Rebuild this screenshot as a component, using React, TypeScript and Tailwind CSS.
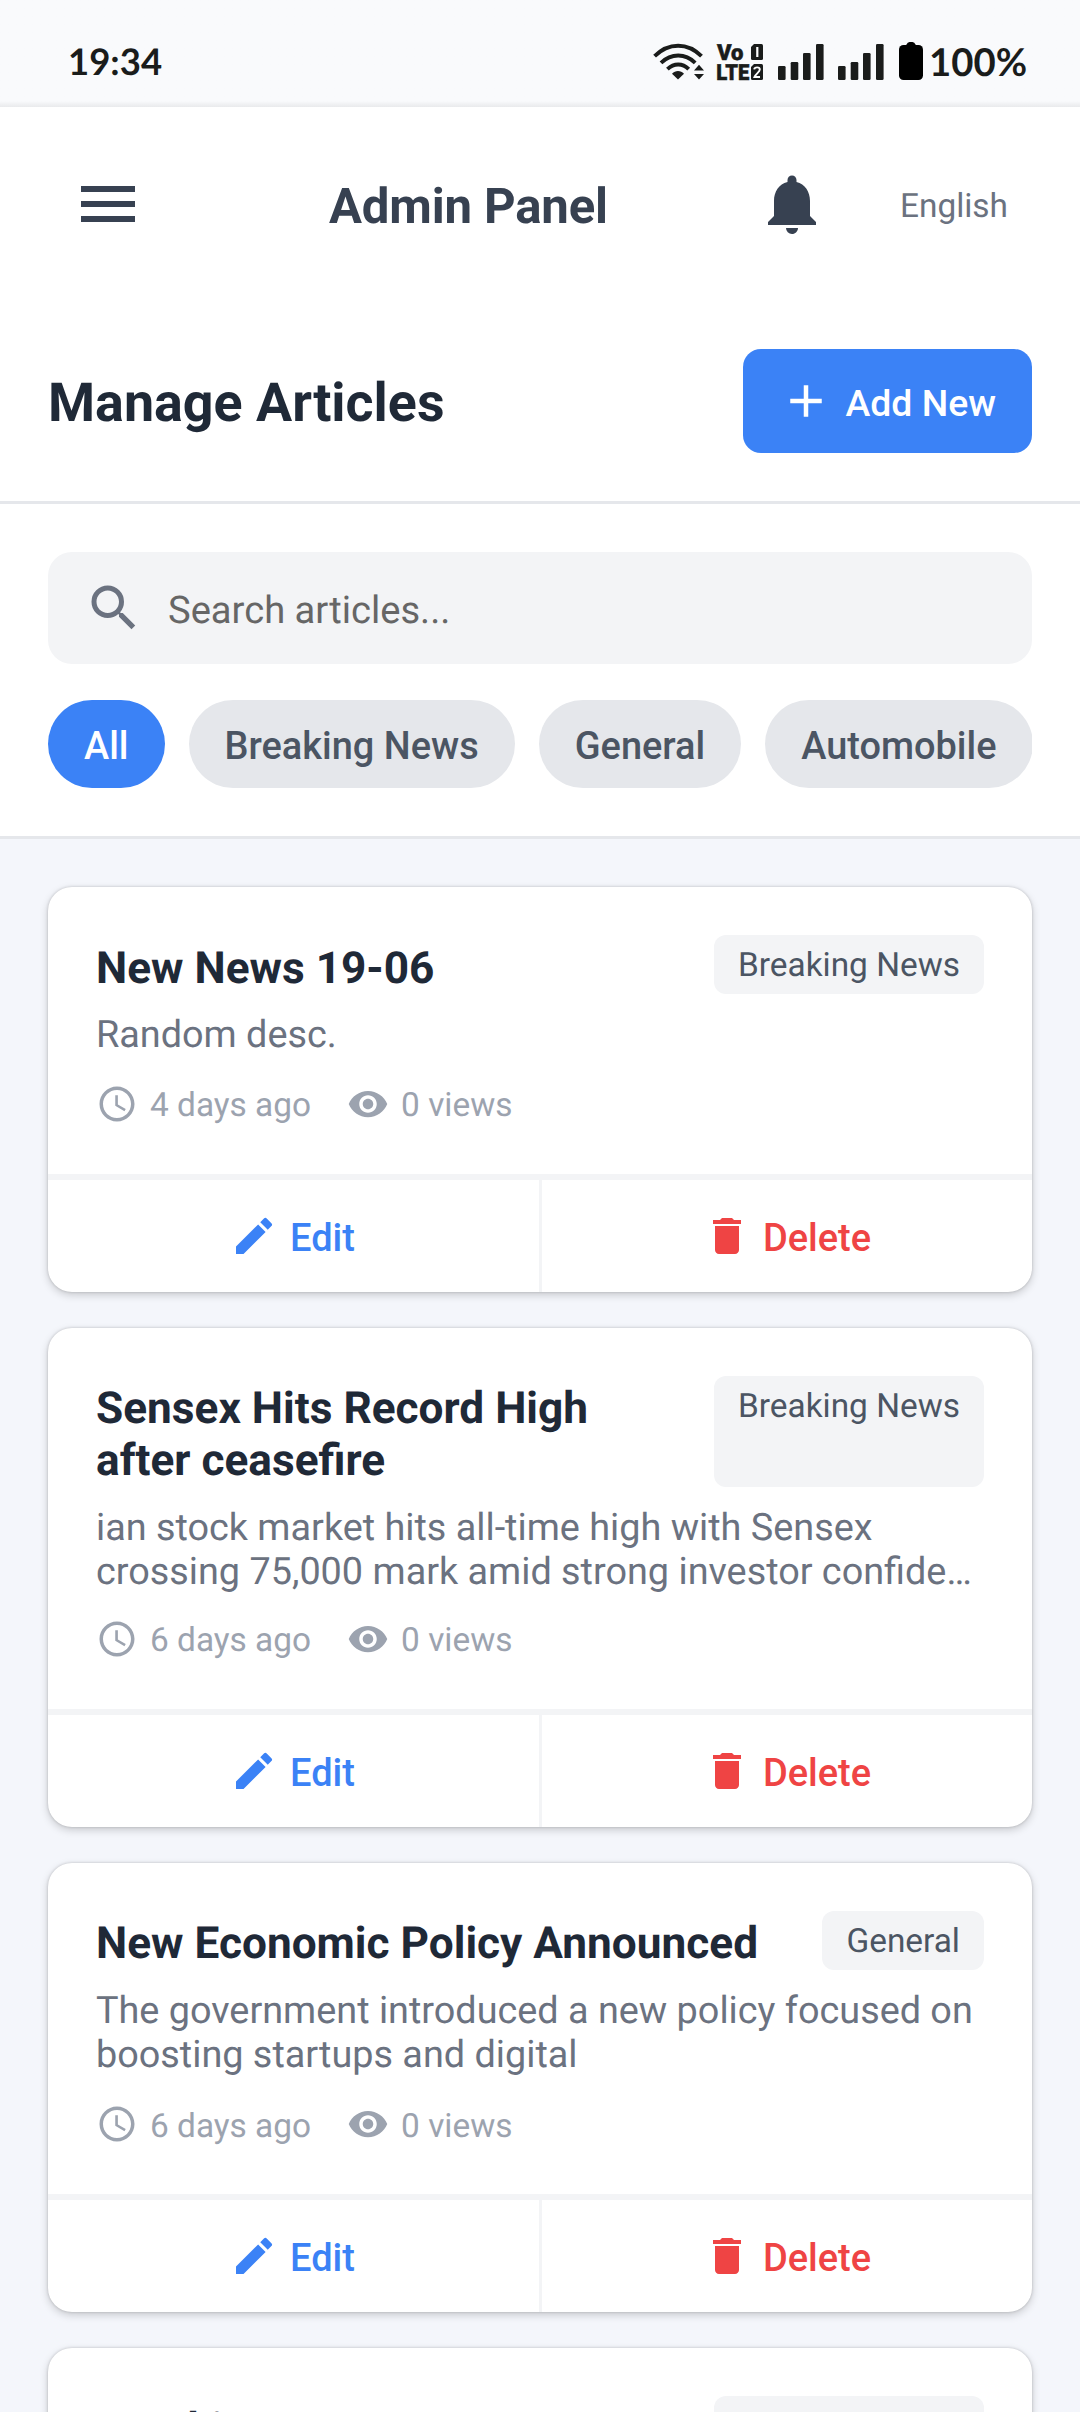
import { MdAccessTime, MdAdd, MdDelete, MdEdit, MdMenu, MdNotifications, MdSearch, MdVisibility } from "react-icons/md";

type Article = {
  title: string;
  category: string;
  description: string;
  age: string;
  clipped?: boolean;
};

const articles: Article[] = [
  { title: "New News 19-06", category: "Breaking News", description: "Random desc.", age: "4 days ago" },
  {
    title: "Sensex Hits Record High\nafter ceasefire",
    category: "Breaking News",
    description: "ian stock market hits all-time high with Sensex\ncrossing 75,000 mark amid strong investor confide…",
    age: "6 days ago",
    clipped: true,
  },
  {
    title: "New Economic Policy Announced",
    category: "General",
    description: "The government introduced a new policy focused on\nboosting startups and digital",
    age: "6 days ago",
  },
  { title: "Breaking News", category: "Breaking News", description: "", age: "6 days ago" },
];

const filters = ["All", "Breaking News", "General", "Automobile"];

function WifiIcon() {
  return (
    <svg width="52" height="38" viewBox="0 0 52 38" fill="none" className="shrink-0">
      <g stroke="#1a1c1b" strokeWidth="3.9">
        <path d="M1.6 13.2C15.5 -.8 34.800 -.8 48.5 13.2" />
        <path d="M8 19.8C18.3 10 32.2 10 42.2 19.8" />
        <path d="M14.4 26.2C21 20 29.5 20 35.7 26.2" />
      </g>
      <path d="M19 30.8c3.4-3.6 8.6-3.6 12 0L25 36.6z" fill="#1a1c1b" />
      <path d="M41 27.4l5-5.6 5 5.6zM41 31h10l-5 5.6z" fill="#1a1c1b" />
    </svg>
  );
}

function VolteIcon() {
  return (
    <svg width="47" height="38" viewBox="0 0 47 38" className="shrink-0 overflow-visible">
      <g fill="#1a1c1b" stroke="#1a1c1b" strokeWidth=".5" fontFamily="Roboto, sans-serif" fontWeight="900">
        <text x="0" y="17.6" fontSize="22" textLength="26.500" lengthAdjust="spacingAndGlyphs">Vo</text>
        <text x="-.8" y="37.6" fontSize="22" textLength="33" lengthAdjust="spacingAndGlyphs">LTE</text>
      </g>
      <path d="M37 2h7.5a1.5 1.5 0 0 1 1.5 1.5v13a1.5 1.5 0 0 1-1.5 1.5h-9a1.5 1.5 0 0 1-1.5-1.5V5z" fill="#1a1c1b" />
      <path d="M37 22h7.5a1.5 1.5 0 0 1 1.5 1.5v13a1.5 1.5 0 0 1-1.5 1.5h-9a1.5 1.5 0 0 1-1.5-1.5V25z" fill="#1a1c1b" />
      <path d="M40.3 5v10" stroke="#fff" strokeWidth="2.2" />
      <path d="M37.2 27.4c.4-2.6 5.6-2.8 5.6.2 0 2.3-4.4 4.6-5.4 7.4h5.6" stroke="#fff" strokeWidth="1.9" fill="none" />
    </svg>
  );
}

function SignalIcon() {
  return (
    <svg width="46" height="36" viewBox="0 0 46 36" fill="#1a1c1b" className="shrink-0">
      <rect x="0" y="22" width="7.6" height="14" rx="1.3" />
      <rect x="12.7" y="18" width="7.6" height="18" rx="1.3" />
      <rect x="25" y="9" width="7.6" height="27" rx="1.3" />
      <rect x="38" y="0" width="7.6" height="36" rx="1.3" />
    </svg>
  );
}

function BatteryIcon() {
  return (
    <svg width="24" height="38" viewBox="0 0 24 38" fill="#000" className="shrink-0">
      <path d="M7.5 4V2.5Q8.5 0 10.5 0h3q2 0 3 2.5V4z" />
      <rect x="0" y="3" width="24" height="35" rx="4.5" />
    </svg>
  );
}

function StatusBar() {
  return (
    <div className="flex h-[107px] items-start justify-between bg-[#f9fafc] bg-linear-to-t from-[#e9eaec] from-0% to-[#f9fafc] to-[6px] pl-[68px] pr-[50px] font-[Lato,sans-serif] font-bold text-[#1a1c1b]">
      <span className="mt-[39px] text-[36.5px] leading-[44px]">19:34</span>
      <div className="flex items-start">
        <div className="mt-[43px] flex items-start">
          <WifiIcon />
          <div className="-mt-px ml-[12px]">
            <VolteIcon />
          </div>
          <div className="ml-[14px] mt-px flex gap-[14px]">
            <SignalIcon />
            <SignalIcon />
          </div>
        </div>
        <div className="ml-[15px] mt-[42px]">
          <BatteryIcon />
        </div>
        <span className="ml-[6px] mt-[39px] w-[101px] text-[38.3px] leading-[46px]">100%</span>
      </div>
    </div>
  );
}

function Header() {
  return (
    <header className="flex h-[194px] items-start bg-white px-[72px] pt-[61px]">
      <MdMenu className="size-[72px] text-[#374151]" />
      <h1 className="ml-[185px] pt-[2px] text-[49.1px] font-bold leading-[72px] tracking-[-0.15px] text-[#374151]">
        Admin Panel
      </h1>
      <MdNotifications className="ml-auto size-[72px] text-[#374151]" />
      <span className="ml-[72px] pt-[3px] text-[33.4px] leading-[72px] text-[#6b7280]">English</span>
    </header>
  );
}

function ArticleCard({ article }: { article: Article }) {
  return (
    <article className="shrink-0 overflow-hidden rounded-[24px] bg-white shadow-[0_3px_8px_rgba(0,0,0,0.18),0_0_3px_rgba(0,0,0,0.18)]">
      <div className="px-12 pb-[49px] pt-12">
        <div className="flex justify-between">
          <h3 className="whitespace-pre pt-[7.5px] text-[44.2px] font-bold leading-[51.6px] text-[#1f2937]">
            {article.title}
          </h3>
          <span className="rounded-[12px] bg-[#f3f4f6] px-6 pt-[11px] text-[33.4px] leading-[40px] text-[#4b5563]">
            {article.category}
          </span>
        </div>
        <p className="mb-[-1px] mt-[19px] whitespace-pre text-[37.8px] leading-[44.4px] text-[#6b7280]">
          {article.description}
        </p>
        <div
          className={`flex h-[42px] items-center text-[33.4px] leading-[42px] text-[#9ca3af] ${
            article.clipped ? "mt-[24.5px]" : "mt-[26.4px]"
          }`}
        >
          <MdAccessTime className="size-[42px]" />
          <span className="ml-3 pt-[5px]">{article.age}</span>
          <MdVisibility className="ml-9 size-[42px]" />
          <span className="ml-3 pt-[5px]">0 views</span>
        </div>
      </div>
      <div className="grid h-[118px] grid-cols-[491px_1fr] border-t-[6px] border-[#f3f4f6] text-[38px] font-medium leading-[44px]">
        <button className="flex items-center justify-center gap-3 pr-[2px] text-[#3b82f6]">
          <MdEdit className="size-12" />
          <span className="pt-[4px]">Edit</span>
        </button>
        <button className="flex items-center justify-center gap-3 border-l-[3px] border-[#f3f4f6] text-[#ef4444]">
          <MdDelete className="size-12" />
          <span className="pt-[4px]">Delete</span>
        </button>
      </div>
    </article>
  );
}

export default function App() {
  return (
    <div className="flex h-[2412px] w-[1080px] flex-col overflow-hidden bg-[#f4f6fb] font-[Roboto,sans-serif] [text-rendering:geometricPrecision] [&>*]:shrink-0">
      <StatusBar />
      <Header />
      <section className="flex items-center justify-between border-b-[3px] border-[#e5e7eb] bg-white p-12">
        <h2 className="pt-[6px] text-[53.8px] font-bold leading-[64px] text-[#1f2937]">Manage Articles</h2>
        <button className="flex h-[104px] items-center gap-3 rounded-[18px] bg-[#3b82f6] px-9 text-[37.4px] font-medium leading-[44px] text-white">
          <MdAdd className="size-[54px]" />
          <span className="pt-[3px]">Add New</span>
        </button>
      </section>
      <section className="flex flex-col gap-9 border-b-[3px] border-[#e5e7eb] bg-white p-12">
        <div className="flex h-[112px] items-center rounded-[24px] bg-[#f3f4f6] px-9">
          <MdSearch className="size-[60px] text-[#6b7280]" />
          <span className="ml-6 pt-[6px] text-[38.15px] leading-[44px] text-[#666666]">Search articles...</span>
        </div>
        <div className="flex gap-6 overflow-hidden">
          {filters.map((name) => (
            <button
              key={name}
              className={`h-[88px] shrink-0 whitespace-nowrap rounded-full px-9 pt-[4px] text-[37.95px] font-medium leading-[44px] ${
                name === "All" ? "bg-[#3b82f6] text-white" : "bg-[#e5e7eb] text-[#4b5563]"
              }`}
            >
              {name}
            </button>
          ))}
        </div>
      </section>
      <main className="flex flex-col gap-9 px-12 pt-12">
        {articles.map((article) => (
          <ArticleCard key={article.title} article={article} />
        ))}
      </main>
    </div>
  );
}
